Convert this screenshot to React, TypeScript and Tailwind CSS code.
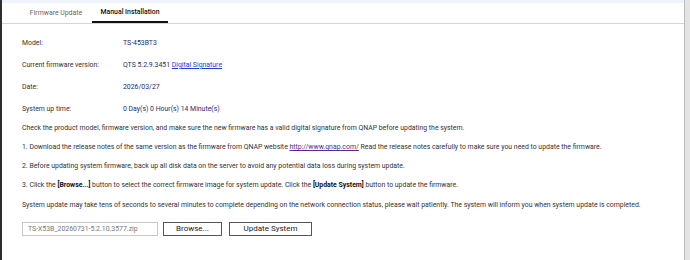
export default function App() {
  const rows = [
    { label: "Model:", value: <span>TS-453BT3</span> },
    {
      label: "Current firmware version:",
      value: (
        <span>
          QTS 5.2.9.3451 <a className="text-[#1a3fd6] underline">Digital Signature</a>
        </span>
      ),
    },
    { label: "Date:", value: <span>2026/03/27</span> },
    { label: "System up time:", value: <span>0 Day(s) 0 Hour(s) 14 Minute(s)</span> },
  ];

  return (
    <div
      className="flex h-[260px] w-[690px] overflow-hidden bg-white text-[6.9px] text-[#333]"
      style={{ fontFamily: "Roboto, 'Liberation Sans', sans-serif" }}
    >
      <div className="w-[2px] shrink-0 bg-[#2e2e2e]" />
      <div className="flex min-w-0 flex-1 flex-col">
        <div className="h-[3px] bg-[#eef3fc]" />
        <div className="flex h-[21px] items-end border-b border-[#d4d4d4] pl-[18px]">
          <div className="flex h-[20px] w-[72px] items-center justify-center text-[#666]">
            Firmware Update
          </div>
          <div className="flex h-[20px] w-[76px] items-center justify-center border-b-2 border-[#111] font-medium text-[#111]">
            Manual Installation
          </div>
        </div>

        <div className="flex flex-col pl-[20px] pt-[14px]">
          <div className="flex flex-col gap-[12px]">
            {rows.map((row) => (
              <div className="flex h-[10px] items-center" key={row.label}>
                <div className="w-[101px] text-[#333]">{row.label}</div>
                <div className="text-[#1f2d6b]">{row.value}</div>
              </div>
            ))}
          </div>

          <div className="mt-[9px] flex flex-col gap-[9px]">
            <p className="h-[10px] leading-[10px]">
              Check the product model, firmware version, and make sure the new firmware has a valid digital
              signature from QNAP before updating the system.
            </p>
            <p className="h-[10px] leading-[10px]">
              1. Download the release notes of the same version as the firmware from QNAP website{" "}
              <a className="text-[#5b2a86] underline">http://www.qnap.com/</a> Read the release notes
              carefully to make sure you need to update the firmware.
            </p>
            <p className="h-[10px] leading-[10px]">
              2. Before updating system firmware, back up all disk data on the server to avoid any potential
              data loss during system update.
            </p>
            <p className="h-[10px] leading-[10px]">
              3. Click the <b className="font-bold text-[#111]">[Browse...]</b> button to select the correct
              firmware image for system update. Click the{" "}
              <b className="font-bold text-[#111]">[Update System]</b> button to update the firmware.
            </p>
            <p className="mt-[1px] h-[10px] leading-[10px]">
              System update may take tens of seconds to several minutes to complete depending on the network
              connection status, please wait patiently. The system will inform you when system update is
              completed.
            </p>
          </div>

          <div className="mt-[12px] flex items-center">
            <div className="flex h-[14px] w-[136px] items-center border border-[#c8c8c8] pl-[5px] text-[#777]">
              TS-X53B_20260731-5.2.10.3577.zip
            </div>
            <button className="ml-[5px] h-[14px] w-[59px] border border-[#555] bg-white text-[8px] text-[#222]">
              Browse...
            </button>
            <button className="ml-[7px] h-[14px] w-[83px] border border-[#555] bg-white text-[8px] text-[#222]">
              Update System
            </button>
          </div>
        </div>
      </div>
      <div className="w-[6px] shrink-0 border-l border-[#bdbdbd] bg-[#e4e4e4]" />
    </div>
  );
}
